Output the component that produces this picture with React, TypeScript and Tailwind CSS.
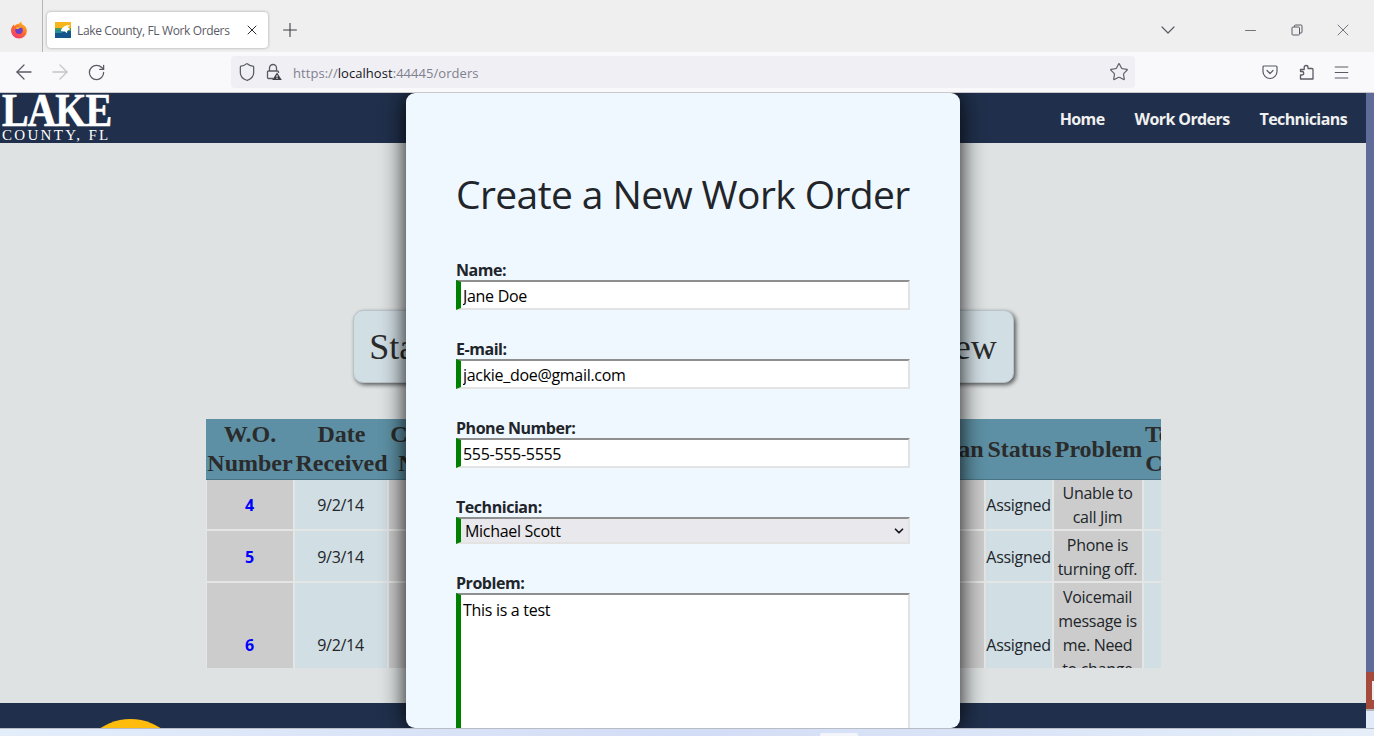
import { ArrowLeft, ArrowRight, ChevronDown, Menu, Minus, Plus, RotateCw, Shield, Star, X } from "lucide-react";

const sans = "font-['Open_Sans','Noto_Sans',sans-serif]";

const headers = [
    ["W.O.", "Number"],
    ["Date", "Received"],
    ["Customer", "Number"],
    ["Phone", "Number"],
    ["Technician"],
    ["Status"],
    ["Problem"],
    ["Technician", "Comments"],
];

const widths = ["w-[89px]", "w-[94px]", "w-[105px]", "w-[377px]", "w-[115px]", "w-[68px]", "w-[90px]", "w-[114px]"];

const orders = [
    { id: 4, date: "9/2/14", problem: "Unable to call Jim", height: "h-[51px]" },
    { id: 5, date: "9/3/14", problem: "Phone is turning off.", height: "h-[52px]" },
    { id: 6, date: "9/2/14", problem: "Voicemail message is me. Need to change greeting.", height: "h-[124px]" },
];

function FirefoxLogo() {
    return (
        <svg width="18" height="18" viewBox="0 0 17 17">
            <defs>
                <linearGradient id="fx" x1="0.8" y1="0" x2="0.2" y2="1">
                    <stop offset="0" stopColor="#ffc01f" />
                    <stop offset="0.5" stopColor="#ff6a2b" />
                    <stop offset="1" stopColor="#f0327a" />
                </linearGradient>
            </defs>
            <path d="M8.5 16.5a7.5 7.5 0 0 1-7.4-8.8C1.6 5.2 3 3.6 4 3c-.2 1 0 1.6.3 2C5 3.6 6.6 2.6 8.3 2.6 9 1.8 10 1 11 .7c-.3 1-.1 1.8.5 2.3 2.6 1.2 4.5 3.4 4.5 6A7.5 7.5 0 0 1 8.5 16.5z" fill="url(#fx)" />
            <circle cx="8.5" cy="8.8" r="3.5" fill="#6b3fc9" />
            <path d="M5 7c1.5-2 5-2.5 6.5-.5-1.5-.5-3 0-3.5 1-1 0-2 0-3-.5z" fill="#ffb21f" />
        </svg>
    );
}

function Favicon() {
    return (
        <svg width="16" height="16" viewBox="0 0 16 16">
            <rect width="16" height="8" fill="#f6b61b" />
            <rect y="6" width="16" height="4" fill="#4f9a55" />
            <rect y="9" width="16" height="7" fill="#14558c" />
            <path d="M0 9c3-2 5-2 7 0v2H0z" fill="#2b8d97" />
            <path d="M6 9c0-3 4-6 9-6-1 1-2 2-2 3 1 0 2 .2 2 1.5-2 0-3 1-3 3.5-1 0-1-1-2-1.5-1 0-3 0-4-.5z" fill="#fff" />
        </svg>
    );
}

function LockWarning() {
    return (
        <svg width="16" height="18" viewBox="0 0 16 18" fill="none" stroke="#5b5b66" strokeWidth="1.3">
            <path d="M3.5 8V5a3.5 3.5 0 0 1 7 0v3" />
            <path d="M7 15.5H2.5a1 1 0 0 1-1-1V9a1 1 0 0 1 1-1h9a1 1 0 0 1 1 1v1" />
            <path d="M11 9.5l4.8 7.5H6.2z" fill="#3f3f46" stroke="none" />
            <rect x="10.5" y="12" width="1" height="2.5" fill="#fff" stroke="none" />
            <rect x="10.5" y="15" width="1" height="1" fill="#fff" stroke="none" />
        </svg>
    );
}

function PocketIcon() {
    return (
        <svg width="16" height="16" viewBox="0 0 16 16" fill="none" stroke="#5b5b66" strokeWidth="1.2">
            <path d="M2 2h12a1 1 0 0 1 1 1v4.5a7 7 0 0 1-14 0V3a1 1 0 0 1 1-1z" />
            <path d="M5 6.5l3 3 3-3" strokeLinecap="round" strokeLinejoin="round" />
        </svg>
    );
}

function PuzzleIcon() {
    return (
        <svg width="16" height="16" viewBox="0 0 16 16" fill="none" stroke="#5b5b66" strokeWidth="1.3" strokeLinejoin="round">
            <path d="M7 1.5c1 0 2 .8 2 1.8V4.500h4a1 1 0 0 1 1 1V15H1.5v-4H3a1.700 1.700 0 0 0 0-3.500H1.5V5.500h3.700V3.300c0-1 .8-1.800 1.800-1.800z" />
        </svg>
    );
}

function RestoreIcon() {
    return (
        <svg width="12" height="12" viewBox="0 0 12 12" fill="none" stroke="#5b5b66" strokeWidth="1">
            <rect x="1" y="3" width="7.5" height="8" rx="1" />
            <path d="M3.5 3V2a1 1 0 0 1 1-1H10a1 1 0 0 1 1 1v6a1 1 0 0 1-1 1H8.5" />
        </svg>
    );
}

function BrowserChrome() {
    return (
        <>
            <div className="flex h-[52px] items-center bg-[#efefef]">
                <div className="flex h-full w-[43px] items-center justify-center border-r border-[#b5b5b5] pr-[5px] pt-[8px]">
                    <FirefoxLogo />
                </div>
                <div className="ml-[4px] mt-[8px] flex h-[36px] w-[221px] items-center rounded-[4px] bg-white pl-[8px] pr-[8px] shadow-[0_0_3px_rgba(0,0,0,0.35)]">
                    <Favicon />
                    <span className={`ml-[6px] flex-1 whitespace-nowrap pt-[1px] text-[12px] tracking-[-0.36px] text-[#5b5b66] ${sans}`}>Lake County, FL Work Orders</span>
                    <X size={16} strokeWidth={1.5} className="text-[#2b2b33]" />
                </div>
                <Plus size={22} strokeWidth={1.2} className="ml-[11px] mt-[8px] text-[#3f3f46]" />
                <div className="mt-[8px] flex flex-1 items-center justify-end">
                    <ChevronDown size={24} strokeWidth={1.2} className="mr-[62px] text-[#5b5b66]" />
                    <Minus size={17} strokeWidth={1.2} className="mr-[32px] text-[#5b5b66]" />
                    <RestoreIcon />
                    <X size={20} strokeWidth={1} className="ml-[30px] mr-[21px] text-[#5b5b66]" />
                </div>
            </div>
            <div className="flex h-[41px] items-center border-b border-[#c9c9cc] bg-[#f9f9fb]">
                <ArrowLeft size={24} strokeWidth={1.3} className="ml-[12px] text-[#5b5b66]" />
                <ArrowRight size={24} strokeWidth={1.3} className="ml-[12px] text-[#c4c4c9]" />
                <RotateCw size={19} strokeWidth={1.6} className="ml-[15px] text-[#5b5b66]" />
                <div className="ml-[125px] flex h-[32px] w-[904px] items-center rounded-[4px] bg-[#f0f0f4] pl-[6px] pr-[6px]">
                    <Shield size={20} strokeWidth={1.5} className="text-[#5b5b66]" />
                    <span className="ml-[9px]">
                        <LockWarning />
                    </span>
                    <span className={`ml-[11px] flex-1 whitespace-nowrap pt-[3px] text-[13px] tracking-[0.05px] text-[#80808e] ${sans}`}>
                        https://<span className="text-[#15141a]">localhost</span>:44445/orders
                    </span>
                    <Star size={20} strokeWidth={1.4} className="text-[#5b5b66]" />
                </div>
                <div className="ml-[127px]"><PocketIcon /></div>
                <div className="ml-[21px]"><PuzzleIcon /></div>
                <Menu size={19} strokeWidth={1.3} className="ml-[17px] text-[#5b5b66]" />
            </div>
        </>
    );
}

function LakeLogo() {
    return (
        <div className="h-[50px] w-[112px] self-start pl-[2px] font-['Liberation_Serif',serif] text-white">
            <div className="h-[30px] origin-top scale-y-[1.17] text-[40px] font-bold leading-[30px] tracking-[-1.1px] [-webkit-text-stroke:0.5px_white]">LAKE</div>
            <div className="mt-[4px] whitespace-nowrap text-[15px] leading-[16px] tracking-[2.3px]">COUNTY, FL</div>
        </div>
    );
}

function OrdersTable() {
    const serif = "font-['Liberation_Serif',serif]";
    const cell = "border-r-2 border-b-2 border-[#e4e6e6] pt-[1px] text-center align-middle";
    return (
        <div className="mx-auto h-[249px] w-[955px] overflow-hidden">
            <table className="w-[1052px] table-fixed border-separate border-spacing-0 text-[16px] leading-6 text-[#212529]">
                <colgroup>
                    {widths.map((w, i) => (
                        <col key={i} className={w} />
                    ))}
                </colgroup>
                <thead>
                    <tr>
                        {headers.map((h, i) => (
                            <th key={i} className={`h-[61px] whitespace-nowrap border-b border-[#4a7486] bg-[#5d90a4] p-0 text-[24px] font-bold leading-[29px] text-[#2b2b2b] ${serif}`}>
                                {h.map((line) => (
                                    <div key={line}>{line}</div>
                                ))}
                            </th>
                        ))}
                    </tr>
                </thead>
                <tbody className={`tracking-[-0.3px] ${sans}`}>
                    {orders.map((o) => (
                        <tr key={o.id} className={o.height}>
                            <td className={`${cell} border-l bg-[#cccccc] font-bold text-[#0000ff]`}>{o.id}</td>
                            <td className={`${cell} bg-[#d1dee4]`}>{o.date}</td>
                            <td className={`${cell} bg-[#cccccc]`}></td>
                            <td className={`${cell} bg-[#d1dee4]`}></td>
                            <td className={`${cell} bg-[#cccccc]`}></td>
                            <td className={`${cell} bg-[#d1dee4]`}>Assigned</td>
                            <td className={`${cell} bg-[#cccccc]`}>{o.problem}</td>
                            <td className={`${cell} bg-[#d1dee4]`}></td>
                        </tr>
                    ))}
                </tbody>
            </table>
        </div>
    );
}

function WorkOrderModal() {
    const field = "block w-full border-2 border-t-[#8f8f8f] border-r-[#e3e3e3] border-b-[#e3e3e3] border-l-[5px] border-l-[#008000] text-[16px] text-black outline-none";
    const label = "block text-[16px] font-bold leading-[20px] tracking-[-0.45px] text-[#212529]";
    return (
        <div className={`absolute left-[406px] top-0 h-[635px] w-[554px] overflow-hidden rounded-[9px] bg-[#eff7ff] px-[50px] pt-[73px] tracking-[-0.3px] shadow-[0_0_25px_rgba(0,0,0,0.95)] ${sans}`}>
            <h1 className="whitespace-nowrap text-[39px] leading-[56px] tracking-[-0.6px] text-[#212529]">Create a New Work Order</h1>
            <form className="mt-[38px]">
                <label className={label}>Name:</label>
                <input type="text" defaultValue="Jane Doe" className={`${field} h-[30px] bg-white px-[2px] pt-[2px]`} />
                <label className={`${label} mt-[29px]`}>E-mail:</label>
                <input type="text" defaultValue="jackie_doe@gmail.com" className={`${field} h-[30px] bg-white px-[2px] pt-[2px]`} />
                <label className={`${label} mt-[29px]`}>Phone Number:</label>
                <input type="text" defaultValue="555-555-5555" className={`${field} h-[30px] bg-white px-[2px] pt-[2px]`} />
                <label className={`${label} mt-[29px]`}>Technician:</label>
                <div className="relative">
                    <select defaultValue="Michael Scott" className={`${field} h-[27px] appearance-none bg-[#e9e8ec] pl-[4px]`}>
                        <option>Michael Scott</option>
                    </select>
                    <ChevronDown size={14} strokeWidth={3} className="absolute right-[4px] top-[7px] text-[#15141a]" />
                </div>
                <label className={`${label} mt-[29px]`}>Problem:</label>
                <textarea defaultValue="This is a test" className={`${field} h-[300px] resize-none bg-white px-[2px] py-[3px]`} />
            </form>
        </div>
    );
}

export default function App() {
    return (
        <div className="h-[736px] w-[1374px] overflow-hidden bg-[#e1ebf9]">
            <BrowserChrome />
            <div className="flex">
                <div className="relative h-[635px] w-[1366px] overflow-hidden">
                    <header className="flex h-[50px] items-center justify-between bg-[#20304c]">
                        <LakeLogo />
                        <nav className={`flex gap-[30px] pr-[19px] pt-[1px] text-[16px] font-bold tracking-[-0.6px] text-[#f0f0f0] ${sans}`}>
                            <a>Home</a>
                            <a>Work Orders</a>
                            <a>Technicians</a>
                        </nav>
                    </header>
                    <main className="h-[560px] bg-[#dee2e3] pt-[167px]">
                        <button className="mx-auto block h-[73px] w-[661px] overflow-hidden whitespace-nowrap rounded-[10px] border border-[#b9c4c9] bg-[#d1dee4] text-center font-['Liberation_Serif',serif] text-[36px] text-[#2b2b2b] shadow-[2px_2px_4px_rgba(0,0,0,0.6)]">
                            Start a New Work Order or Choose to View
                        </button>
                        <div className="mt-[36px]">
                            <OrdersTable />
                        </div>
                    </main>
                    <footer className="h-[25px] overflow-hidden bg-[#20304c] pl-[76px] pt-[16px]">
                        <div className="h-[109px] w-[109px] rounded-full bg-[#ffbc0d]" />
                    </footer>
                    <WorkOrderModal />
                </div>
                <div className="w-[8px]">
                    <div className="h-[579px] bg-[#5f6c99]" />
                    <div className="flex h-[37px] items-center justify-end bg-[#a54b3e]">
                        <div className="h-[19px] w-[2px] border-l-2 border-[#eee]" />
                    </div>
                    <div className="h-[2px] bg-[#b5b5b5]" />
                </div>
            </div>
            <div className="h-[8px] border-t border-[#b8bcc4] bg-linear-to-r from-[#e4edfa] via-[#d2ddf6] to-[#e6eef9] pl-[820px]">
                <div className="mt-[4px] h-[4px] w-[38px] rounded-t-[2px] bg-[#f3f5fb]" />
            </div>
        </div>
    );
}
